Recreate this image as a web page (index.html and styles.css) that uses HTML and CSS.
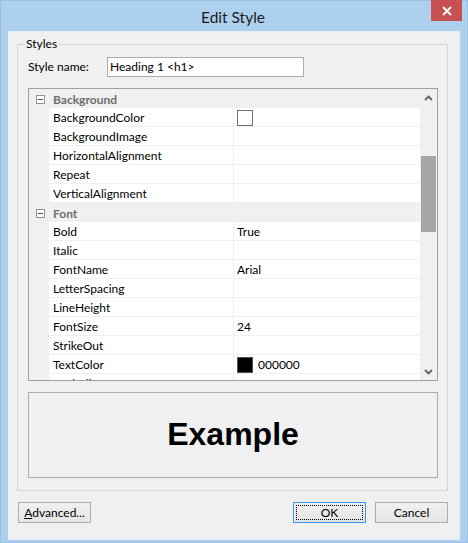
FILE: index.html
```html
<!DOCTYPE html>
<html>
<head>
<meta charset="utf-8">
<link rel="stylesheet" href="styles.css">
</head>
<body>
<div class="window">
  <div class="titlebar">
    <span class="title">Edit Style</span>
    <div class="close"><svg width="10" height="10" viewBox="0 0 10 10"><path d="M1 1L9 9M9 1L1 9" stroke="#fff" stroke-width="1.8"/></svg></div>
  </div>
  <div class="client">
    <fieldset class="group">
      <legend>Styles</legend>
      <div class="name-row">
        <label class="name-label">Style name:</label>
        <div class="input">Heading 1 &lt;h1&gt;</div>
      </div>
      <div class="grid">
        <div class="rows">
          <div class="row cat"><span class="gutter"><span class="minus"></span></span><span class="cat-name">Background</span></div>
          <div class="row"><span class="gutter"></span><span class="name">BackgroundColor</span><span class="value"><span class="swatch"></span></span></div>
          <div class="row"><span class="gutter"></span><span class="name">BackgroundImage</span><span class="value"></span></div>
          <div class="row"><span class="gutter"></span><span class="name">HorizontalAlignment</span><span class="value"></span></div>
          <div class="row"><span class="gutter"></span><span class="name">Repeat</span><span class="value"></span></div>
          <div class="row"><span class="gutter"></span><span class="name">VerticalAlignment</span><span class="value"></span></div>
          <div class="row cat"><span class="gutter"><span class="minus"></span></span><span class="cat-name">Font</span></div>
          <div class="row"><span class="gutter"></span><span class="name">Bold</span><span class="value">True</span></div>
          <div class="row"><span class="gutter"></span><span class="name">Italic</span><span class="value"></span></div>
          <div class="row"><span class="gutter"></span><span class="name">FontName</span><span class="value">Arial</span></div>
          <div class="row"><span class="gutter"></span><span class="name">LetterSpacing</span><span class="value"></span></div>
          <div class="row"><span class="gutter"></span><span class="name">LineHeight</span><span class="value"></span></div>
          <div class="row"><span class="gutter"></span><span class="name">FontSize</span><span class="value">24</span></div>
          <div class="row"><span class="gutter"></span><span class="name">StrikeOut</span><span class="value"></span></div>
          <div class="row"><span class="gutter"></span><span class="name">TextColor</span><span class="value"><span class="swatch black"></span>000000</span></div>
          <div class="row"><span class="gutter"></span><span class="name">Underline</span><span class="value"></span></div>
        </div>
        <div class="scrollbar">
          <div class="arrow"><svg width="9" height="6" viewBox="0 0 9 6"><path d="M1 5L4.5 1.5L8 5" fill="none" stroke="#606060" stroke-width="1.8"/></svg></div>
          <div class="track"><div class="thumb"></div></div>
          <div class="arrow"><svg width="9" height="6" viewBox="0 0 9 6"><path d="M1 1L4.5 4.5L8 1" fill="none" stroke="#606060" stroke-width="1.8"/></svg></div>
        </div>
      </div>
      <div class="example">Example</div>
    </fieldset>
    <div class="buttons">
      <button class="btn"><u>A</u>dvanced...</button>
      <div class="spacer"></div>
      <button class="btn default"><span class="focus">OK</span></button>
      <button class="btn">Cancel</button>
    </div>
  </div>
</div>
</body>
</html>
```

FILE: styles.css
```css
* { box-sizing: border-box; }
html, body { margin: 0; padding: 0; }
body {
  font-family: "Segoe UI", Lato, "Noto Sans", sans-serif;
  font-size: 12px;
  color: #000;
  background: #fff;
}
.window {
  width: 468px;
  height: 543px;
  background: #aed0ef;
  border: 1px solid #9cbfe3;
  padding: 0 7px 2px 7px;
  display: flex;
  flex-direction: column;
}
.titlebar {
  height: 30px;
  position: relative;
  display: flex;
  align-items: center;
  justify-content: center;
}
.title {
  font-size: 15.5px;
  color: #1a1a1a;
  margin-left: -2px;
  margin-top: 1px;
}
.close {
  position: absolute;
  right: -2px;
  top: -1px;
  width: 31px;
  height: 21px;
  background: #c75050;
  display: flex;
  align-items: center;
  justify-content: center;
}
.client {
  flex: 1;
  background: #f0f0f0;
  border: 1px solid #e6eef6;
  display: flex;
  flex-direction: column;
}
.group {
  margin: 4px 0 0 8px;
  width: 431px;
  height: 455px;
  border: 1px solid #d5d5d5;
  padding: 0 9px 0 10px;
  min-width: 0;
}
.group legend {
  padding: 0 1px;
  margin-left: -3px;
  line-height: 16px;
}
.name-row {
  display: flex;
  align-items: center;
  margin-top: 5px;
  height: 20px;
}
.name-label {
  width: 79px;
  padding-bottom: 1px;
}
.input {
  width: 197px;
  height: 20px;
  background: #fff;
  border: 1px solid #abadb3;
  padding: 0 2px;
  line-height: 18px;
}
.grid {
  margin-top: 11px;
  width: 410px;
  height: 293px;
  border: 1px solid #a0a0a0;
  display: flex;
  background: #fff;
}
.rows {
  flex: 1;
  overflow: hidden;
}
.row {
  display: flex;
  height: 19px;
}
.gutter {
  width: 20px;
  flex: none;
  background: #f0f0f0;
  display: flex;
  align-items: center;
}
.name {
  width: 185px;
  flex: none;
  padding-left: 4px;
  line-height: 20px;
  border-bottom: 1px solid #f0f0f0;
  border-right: 1px solid #f0f0f0;
  white-space: nowrap;
}
.value {
  flex: 1;
  display: flex;
  align-items: center;
  padding-left: 3px;
  padding-top: 1px;
  border-bottom: 1px solid #f0f0f0;
}
.row.cat {
  background: #f0f0f0;
}
.cat-name {
  padding-left: 4px;
  font-weight: bold;
  color: #6d6d6d;
  line-height: 21px;
}
.minus {
  width: 9px;
  height: 9px;
  margin-left: 7px;
  margin-top: 1px;
  border: 1px solid #919191;
  background: #fff;
  display: flex;
  align-items: center;
  justify-content: center;
}
.minus::after {
  content: "";
  width: 5px;
  height: 1px;
  background: #4a4a4a;
}
.swatch {
  width: 16px;
  height: 16px;
  border: 1px solid #707070;
  background: #fff;
  margin-right: 5px;
}
.swatch.black {
  background: #000;
  border-color: #505050;
}
.scrollbar {
  width: 17px;
  flex: none;
  background: #f0f0f0;
  display: flex;
  flex-direction: column;
}
.arrow {
  height: 17px;
  display: flex;
  align-items: center;
  justify-content: center;
}
.track {
  flex: 1;
  padding-top: 50px;
}
.thumb {
  width: 15px;
  height: 76px;
  margin-left: 1px;
  background: #a6a6a6;
}
.example {
  margin-top: 11px;
  width: 410px;
  height: 86px;
  border: 1px solid #acacac;
  display: flex;
  align-items: center;
  justify-content: center;
  font-family: "Liberation Sans", Arial, sans-serif;
  font-weight: bold;
  font-size: 32px;
  padding-bottom: 1px;
}
.buttons {
  display: flex;
  margin-top: 11px;
  padding: 0 11px 0 9px;
}
.spacer { flex: 1; }
.btn {
  width: 73px;
  height: 21px;
  font-family: "Segoe UI", Lato, "Noto Sans", sans-serif;
  font-size: 12px;
  color: #000;
  background: linear-gradient(#f0f0f0, #e5e5e5);
  border: 1px solid #acacac;
  border-radius: 0;
  padding: 0;
  margin: 0;
  display: flex;
  align-items: center;
  justify-content: center;
}
.btn + .btn { margin-left: 9px; }
.btn.default {
  border-color: #3399ff;
  padding: 2px;
}
.focus {
  flex: 1;
  align-self: stretch;
  border: 1px dotted #000;
  display: flex;
  align-items: center;
  justify-content: center;
}
```
